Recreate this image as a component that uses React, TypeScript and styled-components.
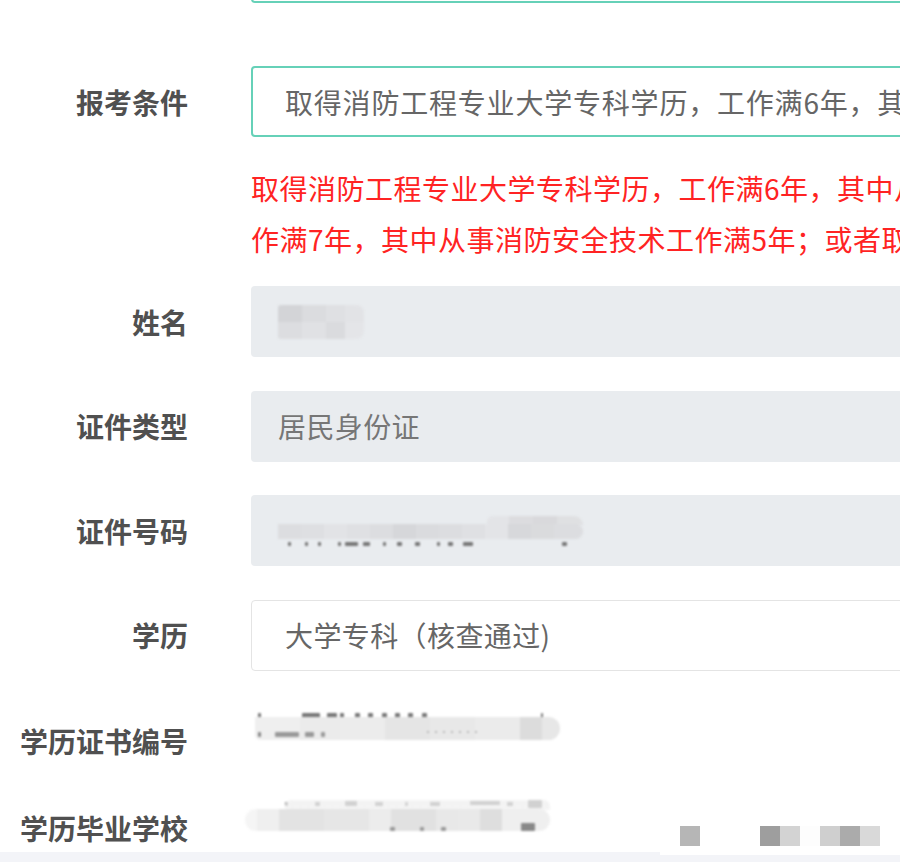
import React from 'react';
import styled, {createGlobalStyle} from 'styled-components';

type Cell = [number, string];

interface Strip {
  top: number;
  left: number;
  h: number;
  cells: Cell[];
  radius?: string;
}

interface Mark {
  x: number;
  y: number;
  w?: number;
  h?: number;
  c?: string;
}

interface SmearData {
  w: number;
  h: number;
  dx?: number;
  dy?: number;
  strips: Strip[];
  marks?: Mark[];
  topMarks?: Mark[];
}

/* 마스킹된 값: 셀 배열을 가로 그라디언트로 */
const gradient = (cells: Cell[]) => {
  let x = 0;
  const stops = cells.map(([w, c]) => {
    const s = `${c} ${x}px ${x + w}px`;
    x += w;
    return s;
  });
  return `linear-gradient(90deg, ${stops.join(', ')})`;
};

const nameSmear: SmearData = {
  w: 86,
  h: 34,
  strips: [
    {top: 0, left: 0, h: 17, radius: '3px 8px 0 0', cells: [[24, '#d3d4d7'], [24, '#dbdcdf'], [19, '#dfe0e3'], [19, '#e2e3e6']]},
    {top: 17, left: 0, h: 17, radius: '0 0 8px 3px', cells: [[24, '#dcdde0'], [24, '#e0e1e4'], [19, '#dadbde'], [19, '#e4e5e8']]},
  ],
};

const idSmear: SmearData = {
  w: 305,
  h: 34,
  strips: [
    {top: 2, left: 209, h: 9, radius: '10px 16px 0 0', cells: [[22, '#e3e4e7'], [24, '#dcdcdf'], [24, '#d9d9dc'], [23, '#dfe0e2']]},
    {
      top: 10,
      left: 0,
      h: 15,
      radius: '0 12px 12px 0',
      cells: [
        [23, '#dcdde0'], [23, '#dedfe2'], [23, '#e2e3e6'], [23, '#dfe0e3'], [23, '#dcdde0'], [23, '#d6d7da'],
        [23, '#dadbde'], [23, '#dcdde0'], [23, '#dfe0e3'], [23, '#e3e4e7'], [23, '#d7d8db'], [23, '#dadbdd'], [24, '#dcdde0'],
      ],
    },
  ],
  marks: [
    {x: 10, y: 28}, {x: 27, y: 28}, {x: 40, y: 28}, {x: 60, y: 28}, {x: 67, y: 28, w: 13}, {x: 85, y: 28, w: 7},
    {x: 105, y: 28}, {x: 119, y: 28, w: 5}, {x: 137, y: 28, w: 5}, {x: 159, y: 28}, {x: 170, y: 28, w: 5},
    {x: 185, y: 28, w: 10}, {x: 284, y: 28, w: 5},
  ],
};

const certSmear: SmearData = {
  w: 305,
  h: 38,
  dx: 4,
  dy: 8,
  marks: [
    {x: 3, y: 5, h: 6}, {x: 47, y: 5, w: 18, h: 6}, {x: 72, y: 5, w: 10, h: 6}, {x: 85, y: 5, w: 4, h: 6},
    {x: 100, y: 5, w: 5, h: 6}, {x: 113, y: 5, w: 5, h: 6}, {x: 127, y: 5, w: 5, h: 6}, {x: 140, y: 5, w: 5, h: 6},
    {x: 153, y: 5, w: 5, h: 6}, {x: 167, y: 5, w: 5, h: 6}, {x: 286, y: 5, w: 2, h: 6},
  ],
  strips: [
    {
      top: 9,
      left: 0,
      h: 23,
      radius: '0 14px 14px 6px',
      cells: [[45, '#efefef'], [40, '#ebebeb'], [45, '#ececec'], [45, '#e5e5e5'], [45, '#e8e8e8'], [45, '#ebebeb'], [22, '#dcdcdc'], [20, '#e7e7e7']],
    },
  ],
  topMarks: [
    {x: 3, y: 24, h: 5, c: '#888'}, {x: 20, y: 24, w: 24, h: 5, c: '#999'}, {x: 50, y: 24, w: 9, h: 5, c: '#999'},
    {x: 66, y: 24, w: 4, h: 5, c: '#999'}, {x: 172, y: 23, w: 2, h: 2, c: '#aaa'}, {x: 180, y: 23, w: 2, h: 2, c: '#aaa'},
    {x: 188, y: 23, w: 2, h: 2, c: '#aaa'}, {x: 196, y: 23, w: 2, h: 2, c: '#aaa'}, {x: 204, y: 23, w: 2, h: 2, c: '#aaa'},
    {x: 212, y: 23, w: 2, h: 2, c: '#aaa'}, {x: 220, y: 23, w: 2, h: 2, c: '#aaa'},
  ],
};

const schoolSmear: SmearData = {
  w: 305,
  h: 40,
  dx: -6,
  dy: 10,
  marks: [
    {x: 40, y: 5}, {x: 70, y: 5, w: 5}, {x: 100, y: 4, w: 12, h: 5}, {x: 130, y: 5, w: 8},
    {x: 160, y: 5}, {x: 185, y: 5, w: 10}, {x: 225, y: 4, w: 30, h: 4}, {x: 262, y: 5, w: 6}, {x: 283, y: 3, w: 14, h: 8},
  ],
  strips: [
    {top: 3, left: 40, h: 10, radius: '6px 6px 0 0', cells: [[255, 'rgba(240,240,240,0.75)']]},
    {
      top: 12,
      left: 0,
      h: 22,
      radius: '12px',
      cells: [
        [12, '#f5f5f5'], [22, '#efefef'], [45, '#e3e3e3'], [45, '#e6e6e6'], [22, '#ececec'], [45, '#e1e1e1'],
        [22, '#e8e8e8'], [22, '#e9e9e9'], [22, '#dedede'], [20, '#efefef'],
      ],
    },
  ],
  topMarks: [
    {x: 145, y: 30, w: 5, h: 4, c: '#999'}, {x: 175, y: 30, w: 4, h: 4, c: '#999'}, {x: 196, y: 30, w: 5, h: 4, c: '#999'},
    {x: 276, y: 26, w: 14, h: 8, c: '#888'},
  ],
};

const footerCells = ['#b6b6b6', '#ffffff', '#ffffff', '#ffffff', '#9e9e9e', '#d3d3d3', '#fdfdfd', '#cfcfcf', '#ababab', '#d9d9d9'];

const Smear = ({data}: {data: SmearData}) => (
  <SmearBox $w={data.w} $h={data.h} $dx={data.dx ?? 0} $dy={data.dy ?? 0}>
    {data.marks?.map((m, i) => (
      <InkMark key={`m${i}`} $x={m.x} $y={m.y} $w={m.w ?? 3} $h={m.h ?? 4} $c={m.c ?? '#777'} />
    ))}
    {data.strips.map((s, i) => (
      <MosaicStrip key={`s${i}`} $top={s.top} $left={s.left} $h={s.h} $bg={gradient(s.cells)} $radius={s.radius ?? '0'} />
    ))}
    {data.topMarks?.map((m, i) => (
      <InkMark key={`t${i}`} $x={m.x} $y={m.y} $w={m.w ?? 3} $h={m.h ?? 4} $c={m.c ?? '#777'} />
    ))}
  </SmearBox>
);

const App = () => {
  return (
    <>
      <GlobalStyle />
      <Page>
        <Form>
          {/* 위로 스크롤되어 잘린 입력칸 */}
          <FieldRow $gap={63}>
            <Label />
            <Field $variant='focus' />
          </FieldRow>

          <FieldRow $gap={0}>
            <Label>报考条件</Label>
            <Field $variant='focus'>
              <FieldText $wide>取得消防工程专业大学专科学历，工作满6年，其中从事消防安全技术工作满4年</FieldText>
            </Field>
          </FieldRow>
          <Hint>
            <HintLine>取得消防工程专业大学专科学历，工作满6年，其中从事消防安全技术工作满4年；或者取得消防工程相关专业大学专科学历，工</HintLine>
            <HintLine>作满7年，其中从事消防安全技术工作满5年；或者取得消防工程专业大学本科学历</HintLine>
          </Hint>

          <FieldRow $gap={33.5}>
            <Label>姓名</Label>
            <Field $variant='disabled'>
              <Smear data={nameSmear} />
            </Field>
          </FieldRow>

          <FieldRow $gap={33.5}>
            <Label>证件类型</Label>
            <Field $variant='disabled'>
              <FieldText $muted>居民身份证</FieldText>
            </Field>
          </FieldRow>

          <FieldRow $gap={33.5}>
            <Label>证件号码</Label>
            <Field $variant='disabled'>
              <Smear data={idSmear} />
            </Field>
          </FieldRow>

          <FieldRow $gap={29.5}>
            <Label>学历</Label>
            <Field $variant='plain'>
              <FieldText>大学专科（核查通过)</FieldText>
            </Field>
          </FieldRow>

          <TextRow>
            <TextLabel>学历证书编号</TextLabel>
            <div>
              <Smear data={certSmear} />
            </div>
          </TextRow>

          <TextRow>
            <TextLabel>学历毕业学校</TextLabel>
            <div>
              <Smear data={schoolSmear} />
            </div>
          </TextRow>
        </Form>

        {/* 하단 고정 바 */}
        <BottomBand />
        <ActionBox>
          {footerCells.map((c, i) => (
            <ActionPixel key={i} $c={c} />
          ))}
        </ActionBox>
      </Page>
    </>
  );
};

const GlobalStyle = createGlobalStyle`
  html, body {
    margin: 0;
    padding: 0;
    background: #ffffff;
  }
  body {
    font-family: 'Noto Sans CJK SC', 'Noto Sans', sans-serif;
  }
`;

const Page = styled.div`
  position: relative;
  width: 900px;
  height: 862px;
  overflow: hidden;
  background: #ffffff;
`;

const Form = styled.div`
  display: flex;
  flex-direction: column;
  width: 1100px;
  margin-top: -68px;
`;

const FieldRow = styled.div<{$gap: number}>`
  display: grid;
  grid-template-columns: 188px 1fr;
  column-gap: 63px;
  align-items: center;
  margin-bottom: ${({$gap}) => $gap}px;
`;

const Label = styled.div`
  text-align: right;
  font-size: 28px;
  line-height: 28px;
  font-weight: 700;
  color: #505050;
  white-space: nowrap;
`;

const variants = {
  focus: 'border: 2px solid #66d1b8; background: #ffffff; padding-left: 32px;',
  disabled: 'border: none; background: #e9ecef; padding-left: 27px;',
  plain: 'border: 1px solid #e4e4e4; background: #ffffff; padding-left: 33px;',
};

const Field = styled.div<{$variant: keyof typeof variants}>`
  box-sizing: border-box;
  height: 71px;
  border-radius: 4px;
  display: flex;
  align-items: center;
  overflow: hidden;
  ${({$variant}) => variants[$variant]}
`;

const FieldText = styled.span<{$muted?: boolean; $wide?: boolean}>`
  font-size: 28px;
  line-height: 32px;
  letter-spacing: ${({$wide}) => ($wide ? '0.8px' : '0.4px')};
  color: ${({$muted}) => ($muted ? '#767676' : '#666666')};
  white-space: nowrap;
`;

const Hint = styled.div`
  margin: 26px 0 21px 251px;
  color: #ff2323;
  font-size: 28px;
  line-height: 51px;
  letter-spacing: 0.5px;
`;

const HintLine = styled.div`
  white-space: nowrap;
`;

const TextRow = styled.div`
  display: grid;
  grid-template-columns: 188px 1fr;
  column-gap: 63px;
  align-items: start;
  height: 87px;
`;

const TextLabel = styled(Label)`
  padding-top: 27px;
`;

const SmearBox = styled.div<{$w: number; $h: number; $dx: number; $dy: number}>`
  position: relative;
  width: ${({$w}) => $w}px;
  height: ${({$h}) => $h}px;
  margin-left: ${({$dx}) => $dx}px;
  margin-top: ${({$dy}) => $dy}px;
  filter: blur(0.9px);
`;

const MosaicStrip = styled.div<{$top: number; $left: number; $h: number; $bg: string; $radius: string}>`
  position: absolute;
  top: ${({$top}) => $top}px;
  left: ${({$left}) => $left}px;
  right: 0;
  height: ${({$h}) => $h}px;
  background: ${({$bg}) => $bg};
  background-repeat: no-repeat;
  border-radius: ${({$radius}) => $radius};
`;

const InkMark = styled.span<{$x: number; $y: number; $w: number; $h: number; $c: string}>`
  position: absolute;
  left: ${({$x}) => $x}px;
  top: ${({$y}) => $y}px;
  width: ${({$w}) => $w}px;
  height: ${({$h}) => $h}px;
  background: ${({$c}) => $c};
  border-radius: 1px;
`;

const BottomBand = styled.div`
  position: absolute;
  left: 0;
  right: 0;
  bottom: 0;
  height: 10px;
  background: #f3f4f8;
`;

const ActionBox = styled.div`
  position: absolute;
  right: 0;
  bottom: 7px;
  width: 240px;
  height: 36px;
  box-sizing: border-box;
  padding: 7px 0 9px 20px;
  display: flex;
  background: #ffffff;
`;

const ActionPixel = styled.span<{$c: string}>`
  width: 20px;
  height: 20px;
  background: ${({$c}) => $c};
`;

export default App;
